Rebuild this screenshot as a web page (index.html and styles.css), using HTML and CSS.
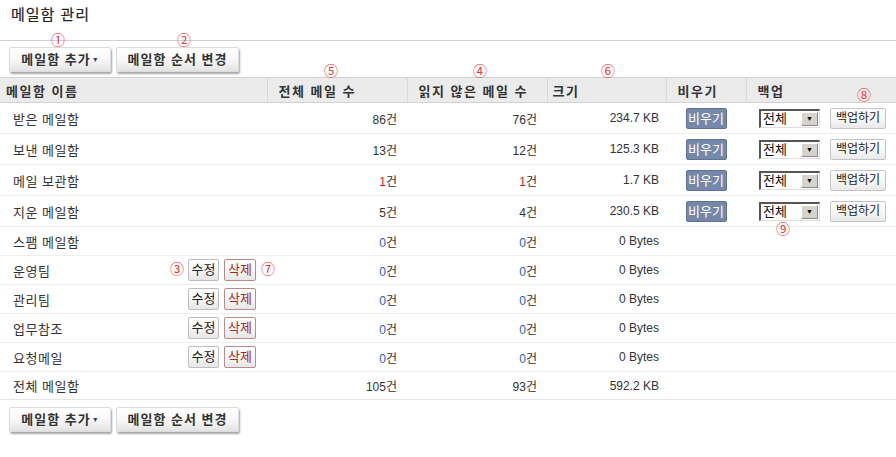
FILE: index.html
```html
<!DOCTYPE html>
<html lang="ko">
<head>
<meta charset="utf-8">
<title>메일함 관리</title>
<link rel="stylesheet" href="styles.css">
</head>
<body>
<div class="page">
  <div class="page-head"><h1 class="title">메일함 관리</h1></div>

  <div class="toolbar">
    <button class="btn-main btn-add">메일함 추가<span class="caret">▼</span></button>
    <button class="btn-main btn-order">메일함 순서 변경</button>
  </div>

  <table class="boxes">
    <colgroup>
      <col class="c-name"><col class="c-total"><col class="c-unread"><col class="c-size"><col class="c-empty"><col class="c-backup">
    </colgroup>
    <thead>
      <tr>
        <th class="h-name">메일함 이름</th>
        <th class="h-pad">전체 메일 수</th>
        <th class="h-pad">읽지 않은 메일 수</th>
        <th class="h-size">크기</th>
        <th class="h-pad">비우기</th>
        <th class="h-pad">백업</th>
      </tr>
    </thead>
    <tbody>
      <tr class="tall">
        <td class="name">받은 메일함</td>
        <td class="num">86건</td><td class="num">76건</td><td class="size">234.7 KB</td>
        <td class="center"><button class="btn-empty">비우기</button></td>
        <td class="backup"><div class="fake-select"><span class="sel-text">전체</span><span class="sel-arrow">▼</span></div><button class="btn-backup">백업하기</button></td>
      </tr>
      <tr class="tall">
        <td class="name">보낸 메일함</td>
        <td class="num">13건</td><td class="num">12건</td><td class="size">125.3 KB</td>
        <td class="center"><button class="btn-empty">비우기</button></td>
        <td class="backup"><div class="fake-select"><span class="sel-text">전체</span><span class="sel-arrow">▼</span></div><button class="btn-backup">백업하기</button></td>
      </tr>
      <tr class="tall">
        <td class="name">메일 보관함</td>
        <td class="num"><span class="red">1</span>건</td><td class="num"><span class="red">1</span>건</td><td class="size">1.7 KB</td>
        <td class="center"><button class="btn-empty">비우기</button></td>
        <td class="backup"><div class="fake-select"><span class="sel-text">전체</span><span class="sel-arrow">▼</span></div><button class="btn-backup">백업하기</button></td>
      </tr>
      <tr class="tall">
        <td class="name">지운 메일함</td>
        <td class="num">5건</td><td class="num">4건</td><td class="size">230.5 KB</td>
        <td class="center"><button class="btn-empty">비우기</button></td>
        <td class="backup"><div class="fake-select"><span class="sel-text">전체</span><span class="sel-arrow">▼</span></div><button class="btn-backup">백업하기</button></td>
      </tr>
      <tr class="short">
        <td class="name">스팸 메일함</td>
        <td class="num"><span class="blue">0</span>건</td><td class="num"><span class="blue">0</span>건</td><td class="size">0 Bytes</td>
        <td></td><td></td>
      </tr>
      <tr class="short">
        <td class="name"><div class="name-flex"><span class="nm">운영팀</span><button class="btn-edit">수정</button><button class="btn-del">삭제</button></div></td>
        <td class="num"><span class="blue">0</span>건</td><td class="num"><span class="blue">0</span>건</td><td class="size">0 Bytes</td>
        <td></td><td></td>
      </tr>
      <tr class="short">
        <td class="name"><div class="name-flex"><span class="nm">관리팀</span><button class="btn-edit">수정</button><button class="btn-del">삭제</button></div></td>
        <td class="num"><span class="blue">0</span>건</td><td class="num"><span class="blue">0</span>건</td><td class="size">0 Bytes</td>
        <td></td><td></td>
      </tr>
      <tr class="short">
        <td class="name"><div class="name-flex"><span class="nm">업무참조</span><button class="btn-edit">수정</button><button class="btn-del">삭제</button></div></td>
        <td class="num"><span class="blue">0</span>건</td><td class="num"><span class="blue">0</span>건</td><td class="size">0 Bytes</td>
        <td></td><td></td>
      </tr>
      <tr class="short">
        <td class="name"><div class="name-flex"><span class="nm">요청메일</span><button class="btn-edit">수정</button><button class="btn-del">삭제</button></div></td>
        <td class="num"><span class="blue">0</span>건</td><td class="num"><span class="blue">0</span>건</td><td class="size">0 Bytes</td>
        <td></td><td></td>
      </tr>
      <tr class="total">
        <td class="name">전체 메일함</td>
        <td class="num">105건</td><td class="num">93건</td><td class="size">592.2 KB</td>
        <td></td><td></td>
      </tr>
    </tbody>
  </table>

  <div class="toolbar bottom">
    <button class="btn-main btn-add">메일함 추가<span class="caret">▼</span></button>
    <button class="btn-main btn-order">메일함 순서 변경</button>
  </div>

  <span class="mark m1">①</span>
  <span class="mark m2">②</span>
  <span class="mark m5">⑤</span>
  <span class="mark m4">④</span>
  <span class="mark m6">⑥</span>
  <span class="mark m8">⑧</span>
  <span class="mark m9">⑨</span>
  <span class="mark m3">③</span>
  <span class="mark m7">⑦</span>
</div>
</body>
</html>
```

FILE: styles.css
```css
html, body {
  margin: 0;
  padding: 0;
  background: #fff;
}
body {
  font-family: "Liberation Sans", "Noto Sans CJK KR", sans-serif;
  font-size: 12px;
  color: #333;
}
.page {
  position: relative;
  width: 896px;
  height: 457px;
  overflow: hidden;
}
.page-head {
  height: 41px;
  box-sizing: border-box;
  border-bottom: 1px solid #cfcfcf;
}
.title {
  margin: 0;
  padding: 5px 0 0 11px;
  font-size: 15px;
  font-weight: normal;
  letter-spacing: 1px;
  color: #222;
  line-height: 20px;
  -webkit-text-stroke: 0.2px #222;
}
.toolbar {
  display: flex;
  gap: 5px;
  padding: 6px 0 0 9px;
}
.toolbar.bottom {
  padding-top: 7px;
}
.btn-main {
  height: 25px;
  box-sizing: border-box;
  padding: 0;
  font-family: inherit;
  font-size: 13px;
  font-weight: bold;
  letter-spacing: 1px;
  color: #333;
  border: 1px solid #dcdcdc;
  border-radius: 2px;
  background: linear-gradient(#ffffff, #f7f7f7 55%, #e3e3e3);
  box-shadow: 1px 2px 2px rgba(0, 0, 0, 0.35);
  line-height: 22px;
  text-align: center;
}
.btn-add { width: 102px; }
.btn-order { width: 123px; }
.caret {
  font-size: 7px;
  color: #1f4f5a;
  margin-left: 1px;
  letter-spacing: 0;
  vertical-align: 2px;
}
.boxes {
  margin-top: 5px;
  width: 896px;
  border-collapse: collapse;
  table-layout: fixed;
}
.c-name { width: 267px; }
.c-total { width: 140px; }
.c-unread { width: 140px; }
.c-size { width: 119px; }
.c-empty { width: 80px; }
.c-backup { width: 150px; }
.boxes th {
  height: 24px;
  padding: 0 0 0 11px;
  background: #ebebeb;
  border-top: 1px solid #d2d2d2;
  border-bottom: 1px solid #d2d2d2;
  border-left: 1px solid #d9d9d9;
  text-align: left;
  font-size: 13px;
  font-weight: bold;
  letter-spacing: 1.5px;
  color: #333;
}
.boxes th.h-name {
  border-left: none;
  padding-left: 6px;
}
.boxes th.h-size { padding-left: 5px; }
.boxes td {
  padding: 0;
  border-bottom: 1px solid #efefef;
  font-size: 12px;
  color: #333;
  vertical-align: middle;
}
.boxes tr.tall td { height: 30px; }
.boxes tr.short td { height: 28px; }
.boxes tr.total td {
  height: 27px;
  border-bottom-color: #e6e6e6;
}
.boxes td.name {
  padding-left: 13px;
  padding-right: 11px;
  font-size: 13px;
  letter-spacing: 0.5px;
}
.name-flex {
  display: flex;
  align-items: center;
}
.name-flex .nm { flex: 1; }
.boxes td.num {
  text-align: right;
  padding-right: 10px;
}
.boxes td.size {
  text-align: right;
  padding-right: 7px;
}
.boxes td.center { text-align: center; }
.boxes td.backup { padding-left: 13px; }
.red { color: #c4231d; }
.blue { color: #1f5fc4; }
.btn-empty {
  width: 41px;
  height: 21px;
  padding: 0;
  font-family: inherit;
  font-size: 13px;
  color: #fff;
  background: #7489a9;
  border: 1px solid #60728f;
  border-radius: 2px;
  line-height: 19px;
  vertical-align: middle;
}
.fake-select {
  display: inline-flex;
  align-items: stretch;
  width: 61px;
  height: 19px;
  box-sizing: border-box;
  border-style: solid;
  border-width: 2px 1px 1px 2px;
  border-color: #555 #ddd #ddd #555;
  background: #fff;
  vertical-align: middle;
}
.sel-text {
  flex: 1;
  font-size: 13px;
  line-height: 15px;
  padding-left: 2px;
  color: #111;
}
.sel-arrow {
  width: 15px;
  margin: 1px;
  background: #d6d3cc;
  border-top: 1px solid #fff;
  border-left: 1px solid #fff;
  border-right: 1px solid #888;
  border-bottom: 1px solid #888;
  font-size: 7px;
  line-height: 12px;
  text-align: center;
  color: #000;
}
.btn-backup {
  margin-left: 10px;
  width: 56px;
  height: 21px;
  padding: 0;
  font-family: inherit;
  font-size: 12px;
  color: #222;
  border: 1px solid #c4c4c4;
  border-radius: 2px;
  background: linear-gradient(#ffffff, #f6f6f6 60%, #e8e8e8);
  line-height: 19px;
  vertical-align: middle;
}
.btn-edit, .btn-del {
  height: 22px;
  padding: 0;
  font-family: inherit;
  font-size: 13px;
  border-radius: 2px;
  background: linear-gradient(#ffffff, #f6f6f6 55%, #e6e6e6);
  line-height: 20px;
}
.btn-edit {
  width: 31px;
  color: #222;
  border: 1px solid #bdbdbd;
}
.btn-del {
  width: 32px;
  margin-left: 5px;
  color: #a42a2a;
  border: 1px solid #bb8a8a;
}
.mark {
  position: absolute;
  font-family: "Noto Sans CJK KR", sans-serif;
  font-size: 14px;
  line-height: 14px;
  color: #e8393b;
  transform: translate(-50%, -50%);
}
.m1 { left: 58px; top: 39px; }
.m2 { left: 184px; top: 39px; }
.m5 { left: 331px; top: 70px; }
.m4 { left: 480px; top: 70px; }
.m6 { left: 608px; top: 70px; }
.m8 { left: 864px; top: 94px; }
.m9 { left: 783px; top: 228px; }
.m3 { left: 177px; top: 268px; }
.m7 { left: 268px; top: 268px; }
```
